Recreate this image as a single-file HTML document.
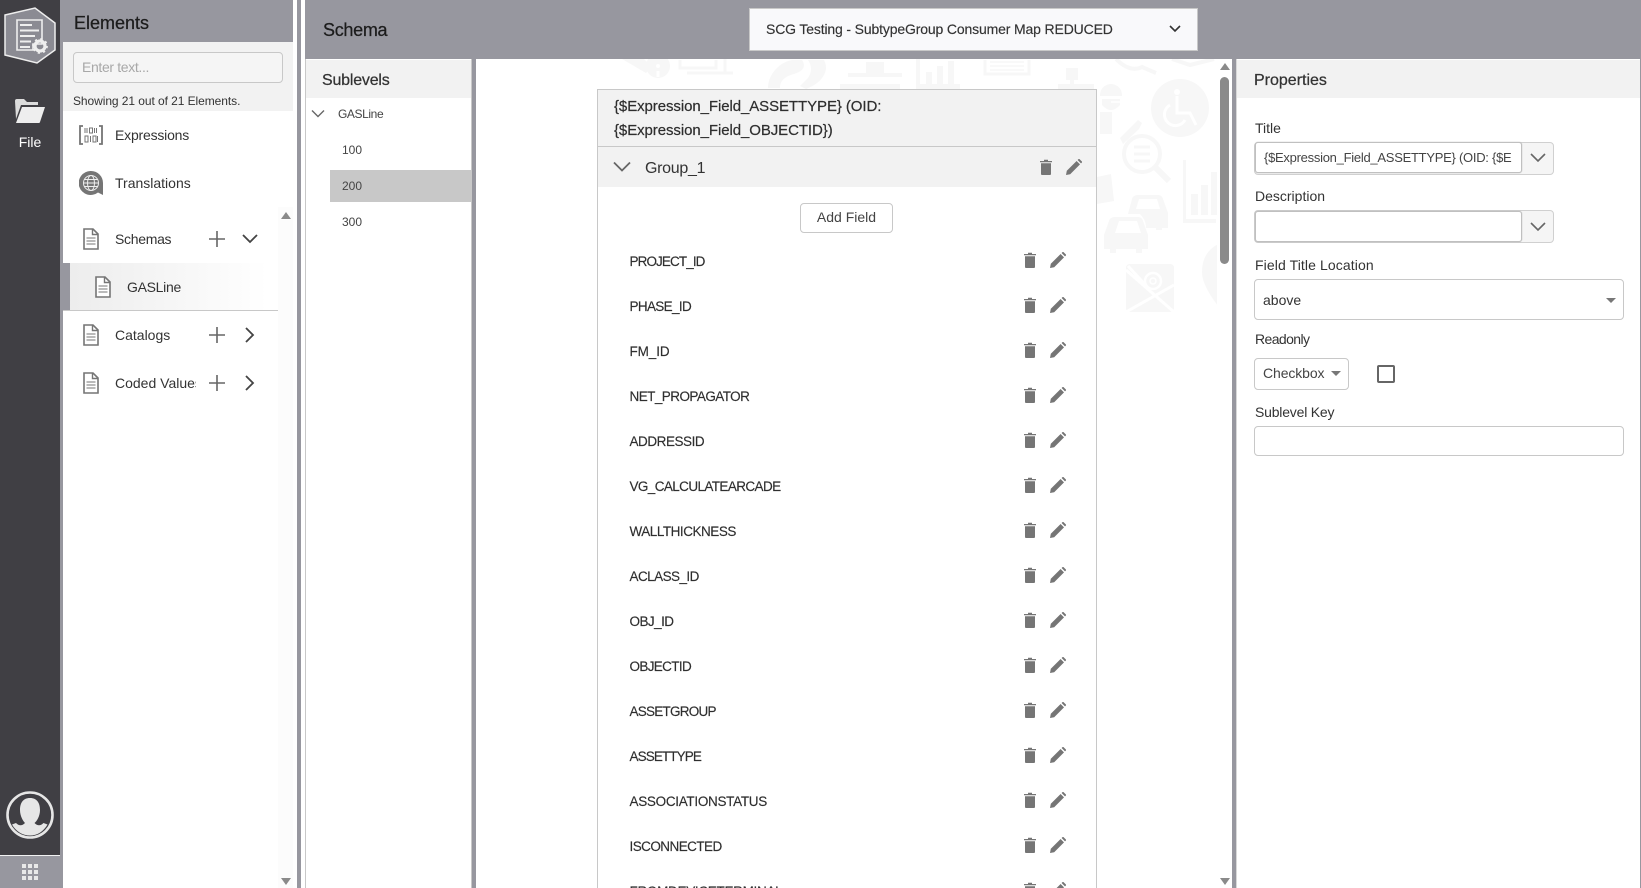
<!DOCTYPE html>
<html lang="en"><head><meta charset="utf-8"><title>Schema</title>
<style>
html,body{margin:0;padding:0;width:1641px;height:888px;overflow:hidden;background:#fff}
body{position:relative;font-family:"Liberation Sans",sans-serif;color:#333;font-size:14px}
.a{position:absolute}
.t{position:absolute;white-space:nowrap;line-height:20px;height:20px}
.f{position:absolute;left:629.5px;white-space:nowrap;line-height:20px;height:20px;font-size:13.5px;letter-spacing:-.55px;color:#2e2e2e;-webkit-text-stroke:.15px #2e2e2e}
.ic{position:absolute;width:16px;height:16px}
.h{-webkit-text-stroke:.25px currentColor}
</style></head><body>
<svg width="0" height="0" style="position:absolute"><defs>
<symbol id="trash" viewBox="0 0 12 16"><path d="M0 2h4V.8h4V2h4v1.3H0z M1 4.3h10V15a1 1 0 0 1-1 1H2a1 1 0 0 1-1-1z" fill="#757575"/></symbol>
<symbol id="pen" viewBox="0 0 16 16"><path d="M0 16l.8-4.2L10.6 2l3.4 3.4-9.8 9.8z M11.6 1l1-1q.4-.3.8 0l2.6 2.6q.3.4 0 .8l-1 1z" fill="#757575"/></symbol>
<symbol id="doc" viewBox="0 0 16 22"><path d="M1 1h9l5 5v15H1z" fill="#fff" stroke="#757575" stroke-width="1.6"/><path d="M9.5 1v5.5H15" fill="none" stroke="#757575" stroke-width="1.4"/><path d="M3.5 10h9M3.5 13h9M3.5 16h9" stroke="#757575" stroke-width="1.1"/></symbol>
<symbol id="plus" viewBox="0 0 16 16"><path d="M8 0v16M0 8h16" stroke="#666" stroke-width="1.6"/></symbol>
</defs></svg>

<!-- left rail -->
<div class="a" style="left:0;top:0;width:60px;height:855px;background:#403f44"></div>
<div class="a" style="left:60px;top:0;width:3px;height:888px;background:#97979f"></div>
<div class="a" style="left:0;top:855px;width:60px;height:1px;background:#f2f2f2"></div>
<div class="a" style="left:0;top:856px;width:63px;height:32px;background:#97979f"></div>
<svg class="a" style="left:0;top:0" width="60" height="70" viewBox="0 0 60 70">
<path d="M5 15L35 8 55 23V50L37 63 5 55z" fill="#8b8b93" stroke="#eee" stroke-width="1.5"/>
<path d="M17 20h25v24H33v6H17z" fill="none" stroke="#eee" stroke-width="1.6"/>
<path d="M20 25h12M20 30.500h19M20 36h15M20 41.500h11M20 47h10" stroke="#eee" stroke-width="2"/>
<circle cx="40" cy="46" r="5" fill="none" stroke="#eee" stroke-width="3.200"/>
<circle cx="40" cy="46" r="7" fill="none" stroke="#eee" stroke-width="1.800" stroke-dasharray="2.200 3.300"/>
</svg>
<svg class="a" style="left:15px;top:99px" width="30" height="24" viewBox="0 0 30 24"><path d="M0 2q0-2 2-2h7l3 3h11v3H6L1 20z" fill="#dcdcdc"/><path d="M7 8h23l-5 15q0 1-2 1H1z" fill="#eee"/></svg>
<div class="t" style="left:0;width:60px;text-align:center;top:132px;color:#fff;font-size:14px">File</div>
<svg class="a" style="left:6px;top:791px" width="48" height="48" viewBox="0 0 48 48"><circle cx="24" cy="24" r="22.500" fill="none" stroke="#e6e6e6" stroke-width="2.600"/><path d="M24 7c7 0 10 5 10 12 0 6-3 11-5.500 13 3 3 6 3 9 0l4 1.500c-4 7-10 11-17.500 11s-14-4-18-11l4-1.500c3 3 6 3 9 0C17 30 14 25 14 19 14 12 17 7 24 7z" fill="#e6e6e6"/></svg>
<svg class="a" style="left:22px;top:864px" width="16" height="16" viewBox="0 0 16 16" fill="#e8e8e8"><path d="M0 0h4v4H0zM6 0h4v4H6zM12 0h4v4h-4zM0 6h4v4H0zM6 6h4v4H6zM12 6h4v4h-4zM0 12h4v4H0zM6 12h4v4H6zM12 12h4v4h-4z"/></svg>

<!-- Elements panel -->
<div class="a" style="left:63px;top:0;width:230px;height:42px;background:#97979f"></div>
<div class="t h" style="left:74px;top:13px;font-size:18px;color:#1c1c1c">Elements</div>
<div class="a" style="left:63px;top:42px;width:230px;height:69px;background:#f2f2f2"></div>
<div class="a" style="left:73px;top:52px;width:208px;height:29px;border:1px solid #c8c8c8;border-radius:4px;background:#f5f5f5"></div>
<div class="t" style="left:82px;top:57px;font-size:14px;color:#a8a8a8;letter-spacing:-.35px">Enter text...</div>
<div class="t" style="left:73px;top:91px;font-size:12px;color:#333;letter-spacing:-.07px">Showing 21 out of 21 Elements.</div>
<svg class="a" style="left:79px;top:125px" width="24" height="20" viewBox="0 0 24 20"><path d="M4 1H1v18h3M20 1h3v18h-3" fill="none" stroke="#757575" stroke-width="1.800"/><path d="M6 3v5M8 3v5M10.500 3h3v5h-3zM15.500 3v5M17.500 3v5M6 11h3v6H6zM11.500 11v6M14 11h3v6h-3zM18.500 11v6" fill="none" stroke="#757575" stroke-width="1"/></svg>
<div class="t" style="left:115px;top:125px;color:#333;font-size:14px;letter-spacing:-.2px">Expressions</div>
<svg class="a" style="left:79px;top:171px" width="24" height="24" viewBox="0 0 24 24"><path d="M12 0a12 12 0 0 1 12 12v12l-5-2.500A12 12 0 1 1 12 0z" fill="#757575"/><g fill="none" stroke="#eee" stroke-width="1"><circle cx="12" cy="12" r="7.500"/><ellipse cx="12" cy="12" rx="3.500" ry="7.500"/><path d="M4.500 12h15M5.500 8.500h13M5.500 15.500h13"/></g></svg>
<div class="t" style="left:115px;top:173px;color:#333;font-size:14px">Translations</div>

<svg class="ic" style="left:83px;top:228px;height:22px"><use href="#doc"/></svg>
<div class="t" style="left:115px;top:229px;color:#333;font-size:14px;letter-spacing:-.3px">Schemas</div>
<svg class="ic" style="left:209px;top:231px"><use href="#plus"/></svg>
<svg class="a" style="left:242px;top:233px" width="16" height="12" viewBox="0 0 16 12"><path d="M1 2l7 7 7-7" fill="none" stroke="#444" stroke-width="1.800"/></svg>

<div class="a" style="left:63px;top:263px;width:215px;height:47px;background:linear-gradient(90deg,#ececec,#fff 95%)"></div>
<div class="a" style="left:63px;top:263px;width:7px;height:47px;background:#97979f"></div>
<div class="a" style="left:63px;top:310px;width:215px;height:1px;background:#c8c8c8"></div>
<svg class="ic" style="left:95px;top:276px;height:22px"><use href="#doc"/></svg>
<div class="t" style="left:127px;top:277px;color:#333;font-size:14px;letter-spacing:-.3px">GASLine</div>

<svg class="ic" style="left:83px;top:324px;height:22px"><use href="#doc"/></svg>
<div class="t" style="left:115px;top:325px;color:#333;font-size:14px">Catalogs</div>
<svg class="ic" style="left:209px;top:327px"><use href="#plus"/></svg>
<svg class="a" style="left:244px;top:327px" width="12" height="16" viewBox="0 0 12 16"><path d="M2 1l7 7-7 7" fill="none" stroke="#444" stroke-width="1.800"/></svg>

<svg class="ic" style="left:83px;top:372px;height:22px"><use href="#doc"/></svg>
<div class="t" style="left:115px;top:373px;width:81px;overflow:hidden;color:#333;font-size:14px">Coded Values</div>
<svg class="ic" style="left:209px;top:375px"><use href="#plus"/></svg>
<svg class="a" style="left:244px;top:375px" width="12" height="16" viewBox="0 0 12 16"><path d="M2 1l7 7-7 7" fill="none" stroke="#444" stroke-width="1.800"/></svg>

<div class="a" style="left:278px;top:207px;width:15px;height:681px;background:#fcfcfc"></div>
<div class="a" style="left:281px;top:212px;border:5px solid transparent;border-top:0;border-bottom:7px solid #8a8a8a"></div>
<div class="a" style="left:281px;top:878px;border:5px solid transparent;border-bottom:0;border-top:7px solid #8a8a8a"></div>

<div class="a" style="left:297px;top:0;width:4px;height:888px;background:#97979f"></div>
<div class="a" style="left:305px;top:0;width:1px;height:888px;background:#c8c8c8"></div>

<!-- Schema header -->
<div class="a" style="left:305px;top:0;width:1336px;height:59px;background:#97979f"></div>
<div class="t h" style="left:323px;top:20px;font-size:18px;color:#1c1c1c;letter-spacing:-.3px">Schema</div>
<div class="a" style="left:749px;top:8px;width:447px;height:41px;background:#f9f9fb;border:1px solid #c8c8c8"></div>
<div class="t" style="left:766px;top:19px;font-size:14px;color:#333;letter-spacing:-.15px;-webkit-text-stroke:.15px #333">SCG Testing - SubtypeGroup Consumer Map REDUCED</div>
<svg class="a" style="left:1169px;top:25px" width="12" height="8" viewBox="0 0 12 8"><path d="M1 1l5 5 5-5" fill="none" stroke="#333" stroke-width="1.600"/></svg>

<!-- Sublevels -->
<div class="a" style="left:306px;top:59px;width:165px;height:829px;background:#fff;border-right:1px solid #c8c8c8"></div>
<div class="a" style="left:306px;top:60px;width:165px;height:38px;background:#f2f2f2"></div>
<div class="t h" style="left:322px;top:71px;font-size:16px;color:#333;letter-spacing:-.2px">Sublevels</div>
<svg class="a" style="left:311px;top:109px" width="14" height="10" viewBox="0 0 14 10"><path d="M1 1.500l6 6 6-6" fill="none" stroke="#666" stroke-width="1.400"/></svg>
<div class="t" style="left:338px;top:104px;font-size:12px;color:#444;letter-spacing:-.4px">GASLine</div>
<div class="t" style="left:342px;top:140px;font-size:12px;color:#444">100</div>
<div class="a" style="left:330px;top:170px;width:141px;height:32px;background:#c8c8c8"></div>
<div class="t" style="left:342px;top:176px;font-size:12px;color:#444">200</div>
<div class="t" style="left:342px;top:212px;font-size:12px;color:#444">300</div>
<div class="a" style="left:472px;top:59px;width:4px;height:829px;background:#97979f"></div>

<!-- watermark -->
<svg class="a" style="left:476px;top:59px" width="756" height="829" viewBox="476 59 756 829">
<g fill="#f7f7f7">
<circle cx="1180" cy="108" r="29"/>
<circle cx="658" cy="66" r="12"/>
<path d="M622 59h22l8 8-6 6z"/>
<rect x="866" y="62" width="18" height="11"/><rect x="840" y="84" width="60" height="5"/><rect x="848" y="73" width="54" height="4"/>
<path d="M916 59h4v25h40v5h-44z"/><rect x="926" y="72" width="6" height="12"/><rect x="937" y="66" width="6" height="18"/><rect x="948" y="61" width="6" height="23"/>
<rect x="1066" y="68" width="12" height="12"/><rect x="1070" y="80" width="4" height="6"/><rect x="1058" y="84" width="36" height="5"/>
<path d="M1100 95a11 11 0 0 1 22 0v1h-22z"/><path d="M1102 99h18v6q-9 10-18 0z"/>
<path d="M1120 138l18-18 4 3-3 6-16 15z"/><path d="M1100 112h12v22h-12z"/>
<path d="M1183 160h3v59h30v4h-33z"/><rect x="1191" y="194" width="7" height="21"/><rect x="1201" y="185" width="7" height="30"/><rect x="1211" y="172" width="6" height="43"/>
<path d="M1097 177l14-3 3 27-17 3z"/>
<path d="M1138 195h20q4 0 5 4l5 14v15h-6v2h-6v-2h-10q0-8-6-14h-12l4-15q1-4 6-4zm1 4l-3 10h24l-3-10z" fill-rule="evenodd"/>
<path d="M1118 217h20q4 0 5 4l5 14v14h-6v4h-6v-4h-20v4h-6v-4h-6v-14l5-14q1-4 6-4zm1 4l-4 12h26l-4-12z" fill-rule="evenodd"/>
<path d="M1130 264h40q4 0 4 4v40q0 4-4 4h-40q-4 0-4-4v-40q0-4 4-4z"/>
<path d="M1232 240q-30 5-30 32 0 18 30 50z"/>
<path d="M792 60c-12 2-24 14-24 28h12c0-8 6-12 14-14 10-3 12-8 8-14zM808 60c4 6 4 12 0 18l-8 8 6 3c16-6 24-18 18-29z"/>
</g>
<g fill="none" stroke="#fff">
<circle cx="658" cy="66" r="2" fill="#fff" stroke="none"/><path d="M658 71v6" stroke-width="3"/>
<circle cx="1177" cy="92" r="3" fill="#fff" stroke="none"/>
<path d="M1177 96v17h13l6 12M1170 105a11 11 0 1 0 15 15" stroke-width="3"/>
<path d="M1126 270l48 42M1174 285l-48 27M1150 290l-22-24" stroke-width="3"/>
<circle cx="1153" cy="281" r="8" stroke-width="2.500" fill="#f7f7f7"/>
<circle cx="1153" cy="281" r="3" stroke-width="1.500"/>
<path d="M1111 102h10" stroke-width="1.500"/>
</g>
<g fill="none" stroke="#f7f7f7">
<path d="M680 60v8h36v-8" stroke-width="3"/><path d="M687 73h46" stroke-width="3"/><path d="M725 59v14" stroke-width="3"/>
<path d="M985 60v14h44V60" stroke-width="3"/>
<path d="M990 62h34M990 66h34M990 70h34" stroke-width="1.500"/>
<circle cx="1142" cy="154" r="18" stroke-width="4"/>
<path d="M1155 167l14 14" stroke-width="6"/>
<path d="M1134 147h16M1134 154h16M1134 161h16" stroke-width="3"/>
<path d="M1116 59q14 14 26 8l14 6" stroke-width="4"/>
<path d="M1172 59l18 6 24-6" stroke-width="4"/>
</g>
</svg>

<!-- Card -->
<div class="a" style="left:597px;top:89px;width:498px;height:799px;border:1px solid #c8c8c8;border-bottom:0;background:#fff"></div>
<div class="a" style="left:598px;top:90px;width:498px;height:56px;background:#f2f2f2;border-bottom:1px solid #c8c8c8"></div>
<div class="t" style="left:614px;top:95px;font-size:15px;color:#2e2e2e;line-height:24px;height:24px;letter-spacing:-.08px;-webkit-text-stroke:.2px #2e2e2e">{$Expression_Field_ASSETTYPE} (OID:</div>
<div class="t" style="left:614px;top:119px;font-size:15px;color:#2e2e2e;line-height:24px;height:24px;letter-spacing:-.08px;-webkit-text-stroke:.2px #2e2e2e">{$Expression_Field_OBJECTID})</div>
<div class="a" style="left:598px;top:147px;width:498px;height:40px;background:#f2f2f2"></div>
<svg class="a" style="left:613px;top:161px" width="18" height="12" viewBox="0 0 18 12"><path d="M1 1.500l8 8 8-8" fill="none" stroke="#666" stroke-width="1.800"/></svg>
<div class="t" style="left:645px;top:159px;font-size:16px;color:#333;letter-spacing:-.3px">Group_1</div>
<svg class="a" style="left:1040px;top:159px" width="12" height="16"><use href="#trash"/></svg>
<svg class="ic" style="left:1066px;top:159px"><use href="#pen"/></svg>

<div class="a" style="left:800px;top:203px;width:91px;height:28px;border:1px solid #c8c8c8;border-radius:4px;background:#fff;text-align:center;line-height:27px;font-size:14px;color:#444">Add Field</div>

<div class="f" style="top:252px;letter-spacing:-.9px">PROJECT_ID</div>
<div class="f" style="top:297px;letter-spacing:-.65px">PHASE_ID</div>
<div class="f" style="top:342px;letter-spacing:-.1px">FM_ID</div>
<div class="f" style="top:387px">NET_PROPAGATOR</div>
<div class="f" style="top:432px;letter-spacing:-.45px">ADDRESSID</div>
<div class="f" style="top:477px;letter-spacing:-.6px">VG_CALCULATEARCADE</div>
<div class="f" style="top:522px;letter-spacing:-.47px">WALLTHICKNESS</div>
<div class="f" style="top:567px">ACLASS_ID</div>
<div class="f" style="top:612px">OBJ_ID</div>
<div class="f" style="top:657px;letter-spacing:-.65px">OBJECTID</div>
<div class="f" style="top:702px;letter-spacing:-.75px">ASSETGROUP</div>
<div class="f" style="top:747px;letter-spacing:-.9px">ASSETTYPE</div>
<div class="f" style="top:792px;letter-spacing:-.3px">ASSOCIATIONSTATUS</div>
<div class="f" style="top:837px">ISCONNECTED</div>
<div class="f" style="top:882px;letter-spacing:-.3px">FROMDEVICETERMINAL</div>

<svg class="a" style="left:1024px;top:252px" width="12" height="16"><use href="#trash"/></svg><svg class="ic" style="left:1050px;top:252px"><use href="#pen"/></svg>
<svg class="a" style="left:1024px;top:297px" width="12" height="16"><use href="#trash"/></svg><svg class="ic" style="left:1050px;top:297px"><use href="#pen"/></svg>
<svg class="a" style="left:1024px;top:342px" width="12" height="16"><use href="#trash"/></svg><svg class="ic" style="left:1050px;top:342px"><use href="#pen"/></svg>
<svg class="a" style="left:1024px;top:387px" width="12" height="16"><use href="#trash"/></svg><svg class="ic" style="left:1050px;top:387px"><use href="#pen"/></svg>
<svg class="a" style="left:1024px;top:432px" width="12" height="16"><use href="#trash"/></svg><svg class="ic" style="left:1050px;top:432px"><use href="#pen"/></svg>
<svg class="a" style="left:1024px;top:477px" width="12" height="16"><use href="#trash"/></svg><svg class="ic" style="left:1050px;top:477px"><use href="#pen"/></svg>
<svg class="a" style="left:1024px;top:522px" width="12" height="16"><use href="#trash"/></svg><svg class="ic" style="left:1050px;top:522px"><use href="#pen"/></svg>
<svg class="a" style="left:1024px;top:567px" width="12" height="16"><use href="#trash"/></svg><svg class="ic" style="left:1050px;top:567px"><use href="#pen"/></svg>
<svg class="a" style="left:1024px;top:612px" width="12" height="16"><use href="#trash"/></svg><svg class="ic" style="left:1050px;top:612px"><use href="#pen"/></svg>
<svg class="a" style="left:1024px;top:657px" width="12" height="16"><use href="#trash"/></svg><svg class="ic" style="left:1050px;top:657px"><use href="#pen"/></svg>
<svg class="a" style="left:1024px;top:702px" width="12" height="16"><use href="#trash"/></svg><svg class="ic" style="left:1050px;top:702px"><use href="#pen"/></svg>
<svg class="a" style="left:1024px;top:747px" width="12" height="16"><use href="#trash"/></svg><svg class="ic" style="left:1050px;top:747px"><use href="#pen"/></svg>
<svg class="a" style="left:1024px;top:792px" width="12" height="16"><use href="#trash"/></svg><svg class="ic" style="left:1050px;top:792px"><use href="#pen"/></svg>
<svg class="a" style="left:1024px;top:837px" width="12" height="16"><use href="#trash"/></svg><svg class="ic" style="left:1050px;top:837px"><use href="#pen"/></svg>
<svg class="a" style="left:1024px;top:882px" width="12" height="16"><use href="#trash"/></svg><svg class="ic" style="left:1050px;top:882px"><use href="#pen"/></svg>

<!-- canvas scrollbar -->
<div class="a" style="left:1217px;top:59px;width:15px;height:829px;background:#fff"></div>
<div class="a" style="left:1220px;top:63px;border:5px solid transparent;border-top:0;border-bottom:7px solid #8a8a8a"></div>
<div class="a" style="left:1220px;top:77px;width:9px;height:187px;border-radius:4.500px;background:#8a8a8a"></div>
<div class="a" style="left:1220px;top:878px;border:5px solid transparent;border-bottom:0;border-top:7px solid #8a8a8a"></div>
<div class="a" style="left:1232px;top:59px;width:4px;height:829px;background:#97979f"></div>

<!-- Properties -->
<div class="a" style="left:1236px;top:59px;width:1px;height:829px;background:#d8d8d8"></div>
<div class="a" style="left:1237px;top:60px;width:403px;height:38px;background:#f2f2f2"></div>
<div class="a" style="left:1640px;top:59px;width:1px;height:829px;background:#97979f"></div>
<div class="t h" style="left:1254px;top:71px;font-size:16px;color:#333">Properties</div>

<div class="t" style="left:1255px;top:118px;font-size:14px;color:#333">Title</div>
<div class="a" style="left:1254px;top:142px;width:298px;height:31px;border:1px solid #d0d0d0;border-radius:4px;background:#f5f5f5"></div>
<div class="a" style="left:1255px;top:142px;width:265px;height:29px;border:1px solid #c0c0c0;border-radius:3px;background:#fff;box-shadow:0 0 1px #aaa"></div>
<div class="t" style="left:1264px;top:148px;font-size:13px;color:#444;width:250px;overflow:hidden;letter-spacing:-.27px">{$Expression_Field_ASSETTYPE} (OID: {$E</div>
<svg class="a" style="left:1530px;top:153px" width="16" height="10" viewBox="0 0 16 10"><path d="M1 1l7 7 7-7" fill="none" stroke="#666" stroke-width="1.600"/></svg>

<div class="t" style="left:1255px;top:186px;font-size:14px;color:#333">Description</div>
<div class="a" style="left:1254px;top:210px;width:298px;height:31px;border:1px solid #d0d0d0;border-radius:4px;background:#f5f5f5"></div>
<div class="a" style="left:1255px;top:211px;width:265px;height:29px;border:1px solid #c0c0c0;border-radius:3px;background:#fff;box-shadow:0 0 1px #aaa"></div>
<svg class="a" style="left:1530px;top:222px" width="16" height="10" viewBox="0 0 16 10"><path d="M1 1l7 7 7-7" fill="none" stroke="#666" stroke-width="1.600"/></svg>

<div class="t" style="left:1255px;top:255px;font-size:14px;color:#333;letter-spacing:.1px">Field Title Location</div>
<div class="a" style="left:1254px;top:279px;width:368px;height:39px;border:1px solid #c8c8c8;border-radius:4px;background:#fff"></div>
<div class="t" style="left:1263px;top:290px;font-size:14px;color:#333">above</div>
<div class="a" style="left:1606px;top:298px;border:5px solid transparent;border-bottom:0;border-top:5px solid #777"></div>

<div class="t" style="left:1255px;top:329px;font-size:14px;color:#333;letter-spacing:-.6px">Readonly</div>
<div class="a" style="left:1254px;top:358px;width:93px;height:30px;border:1px solid #c8c8c8;border-radius:4px;background:#fff"></div>
<div class="t" style="left:1263px;top:363px;font-size:14px;color:#444;letter-spacing:-.1px">Checkbox</div>
<div class="a" style="left:1331px;top:371px;border:5px solid transparent;border-bottom:0;border-top:5px solid #777"></div>
<div class="a" style="left:1377px;top:365px;width:14px;height:14px;border:2px solid #666;border-radius:2px;background:#fff"></div>

<div class="t" style="left:1255px;top:402px;font-size:14px;color:#333;letter-spacing:-.2px">Sublevel Key</div>
<div class="a" style="left:1254px;top:426px;width:368px;height:28px;border:1px solid #c8c8c8;border-radius:4px;background:#fff"></div>
</body></html>
